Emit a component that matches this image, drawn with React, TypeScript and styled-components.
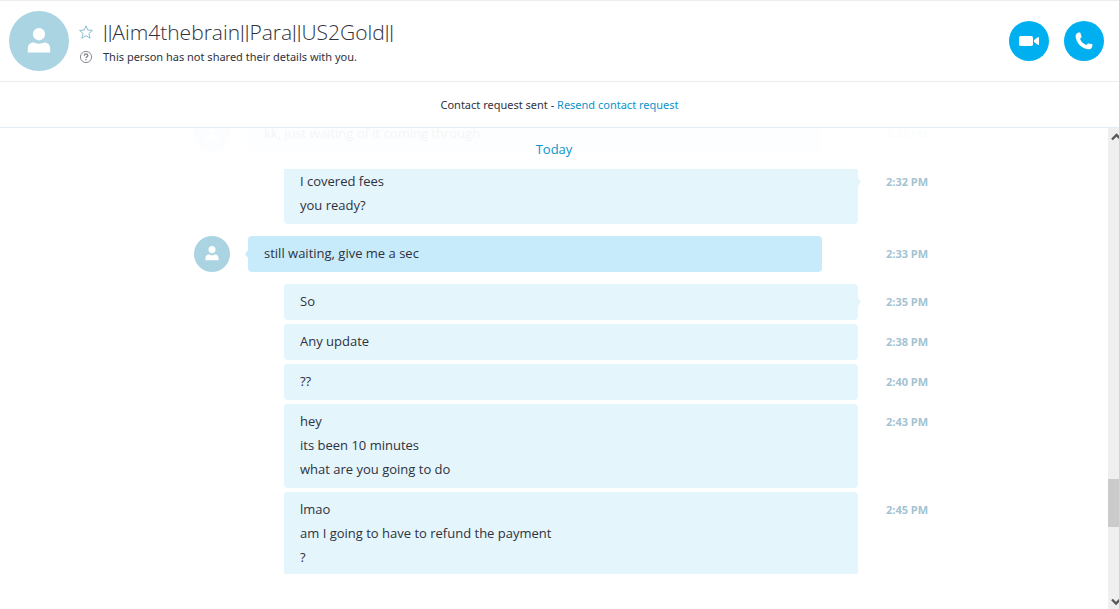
import React from "react";
import styled, { createGlobalStyle } from "styled-components";

const GlobalStyle = createGlobalStyle`
  * { box-sizing: border-box; }
  body {
    margin: 0;
    background: #fff;
    color: #2f323c;
    font-family: "Open Sans", "Noto Sans", sans-serif;
    font-size: 13px;
  }
`;

const Page = styled.div`
  display: flex;
  flex-direction: column;
  height: 100vh;
  overflow: hidden;
`;

const Header = styled.header`
  display: flex;
  align-items: center;
  gap: 10px;
  padding: 10px 15px 10px 9px;
  border-top: 1px solid #ececec;
  border-bottom: 1px solid #ececec;
`;

const Avatar = styled.div<{ $size: number }>`
  display: flex;
  flex: none;
  align-items: center;
  justify-content: center;
  width: ${(p) => p.$size}px;
  height: ${(p) => p.$size}px;
  border-radius: 50%;
  background: #aad4e2;
  color: #fff;
`;

const Details = styled.div`
  display: grid;
  flex: 1;
  grid-template-columns: 14px 1fr;
  column-gap: 10px;
  align-items: center;
`;

const Name = styled.h1`
  margin: 0;
  font-size: 21px;
  font-weight: 300;
  line-height: 30px;
  white-space: nowrap;
`;

const Bars = styled.span`
  font-family: Roboto, sans-serif;
  font-size: 21px;
`;

const Status = styled.p`
  margin: 0;
  font-family: "Noto Sans", sans-serif;
  font-size: 11px;
  line-height: 18px;
`;

const IconButton = styled.button`
  display: flex;
  padding: 0;
  border: 0;
  background: none;
  color: #8dbdd2;
  cursor: pointer;
`;

const HelpMark = styled.span`
  display: flex;
  color: #8b8f94;
`;

const Actions = styled.div`
  display: flex;
  gap: 15px;
`;

const CallButton = styled.button`
  display: flex;
  align-items: center;
  justify-content: center;
  width: 40px;
  height: 40px;
  padding: 0;
  border: 0;
  border-radius: 50%;
  background: #00aff0;
  color: #fff;
  cursor: pointer;
`;

const Notice = styled.div`
  padding: 14px 0 13px;
  border-bottom: 1px solid #e3eef4;
  font-family: "Noto Sans", sans-serif;
  font-size: 11px;
  line-height: 18px;
  text-align: center;
`;

const Link = styled.a`
  color: #0d93c9;
  text-decoration: none;
`;

const Body = styled.main`
  display: flex;
  flex: 1;
  min-height: 0;
`;

const Conversation = styled.section`
  position: relative;
  display: flex;
  flex: 1;
  min-width: 0;
  padding-bottom: 35px;
`;

const Viewport = styled.div`
  flex: 1;
  min-width: 0;
  overflow: hidden;
`;

const DayBar = styled.div`
  position: absolute;
  inset: 0 0 auto;
  height: 41px;
  padding-top: 9px;
  background: rgba(255, 255, 255, 0.95);
  color: #0d93c9;
  line-height: 24px;
  text-align: center;
`;

const Thread = styled.ol`
  display: flex;
  flex-direction: column;
  gap: 12px;
  max-width: 748px;
  margin: -12px auto 0;
  padding: 0 0 0 14px;
  list-style: none;
`;

const Group = styled.li`
  display: flex;
  flex-direction: column;
  gap: 4px;
`;

const Row = styled.div`
  display: grid;
  grid-template-columns: 36px 1fr 42px;
  column-gap: 18px;
`;

const Lane = styled.div<{ $own: boolean }>`
  grid-column: 2;
  padding: ${(p) => (p.$own ? "0 10px 0 36px" : "0 46px 0 0")};
`;

const Bubble = styled.div<{ $own: boolean; $tail: boolean }>`
  position: relative;
  padding: 5px 16px 7px;
  border-radius: 4px;
  background: ${(p) => (p.$own ? "#e4f5fc" : "#c7ebfb")};
  line-height: 24px;

  &::after {
    content: "";
    display: ${(p) => (p.$tail ? "block" : "none")};
    position: absolute;
    top: 14px;
    ${(p) => (p.$own ? "left: 100%" : "right: 100%")};
    border: solid transparent;
    border-width: ${(p) => (p.$own ? "4px 0 4px 3px" : "4px 3px 4px 0")};
    ${(p) => (p.$own ? "border-left-color: #e4f5fc" : "border-right-color: #c7ebfb")};
  }
`;

const Line = styled.p`
  margin: 0;
`;

const Time = styled.time`
  grid-column: 3;
  padding-top: 6px;
  color: #a3c3d3;
  font-size: 11px;
  font-weight: 700;
  line-height: 24px;
  white-space: nowrap;
`;

const Scrollbar = styled.div`
  display: flex;
  flex: none;
  flex-direction: column;
  width: 11px;
  background: #efefef;
  color: #55585c;
`;

const Track = styled.div`
  display: flex;
  flex: 1;
  flex-direction: column;
  justify-content: flex-end;
  padding-bottom: 65px;
`;

const Thumb = styled.div`
  height: 48px;
  background: #cbcbcb;
`;

const Arrow = styled.svg`
  display: block;
  flex: none;
`;

const Person = ({ width }: { width: number }) => (
  <svg width={width} height={(width * 26) / 24} viewBox="0 0 24 26" fill="currentColor" aria-hidden="true">
    <ellipse cx="12" cy="6.200" rx="6" ry="6.200" />
    <path d="M.8 24.500v-3.800c0-4.200 2.600-6.300 5.600-6.300 2 0 2.800 1.300 5.600 1.300s3.600-1.300 5.600-1.300c3 0 5.600 2.100 5.600 6.300v3.800z" />
  </svg>
);

type Message = { time: string; lines: string[] };
type MessageGroup = { own: boolean; messages: Message[] };

const groups: MessageGroup[] = [
  { own: false, messages: [{ time: "2:32 PM", lines: ["kk, just waiting of it coming through"] }] },
  { own: true, messages: [{ time: "2:32 PM", lines: ["I covered fees", "you ready?"] }] },
  { own: false, messages: [{ time: "2:33 PM", lines: ["still waiting, give me a sec"] }] },
  {
    own: true,
    messages: [
      { time: "2:35 PM", lines: ["So"] },
      { time: "2:38 PM", lines: ["Any update"] },
      { time: "2:40 PM", lines: ["??"] },
      { time: "2:43 PM", lines: ["hey", "its been 10 minutes", "what are you going to do"] },
      { time: "2:45 PM", lines: ["lmao", "am I going to have to refund the payment", "?"] },
    ],
  },
];

export default function App() {
  return (
    <Page>
      <GlobalStyle />
      <Header>
        <Avatar $size={60}>
          <Person width={24} />
        </Avatar>
        <Details>
          <IconButton aria-label="Add to favorites">
            <svg width="14" height="14" viewBox="0 0 14 14" fill="none" stroke="currentColor" strokeLinejoin="round">
              <path d="M7 .8l1.800 4.300 4.700.3-3.600 3.100 1.200 4.700L7 10.700l-4.100 2.500 1.200-4.700L.5 5.400l4.700-.3z" />
            </svg>
          </IconButton>
          <Name>
            <Bars>||</Bars>Aim4thebrain<Bars>||</Bars>Para<Bars>||</Bars>US2Gold<Bars>||</Bars>
          </Name>
          <HelpMark>
            <svg width="14" height="14" viewBox="0 0 14 14" fill="none" stroke="currentColor" aria-hidden="true">
              <circle cx="7" cy="7" r="5.600" />
              <path d="M5.200 5.700c0-1 .8-1.600 1.800-1.600s1.800.6 1.800 1.500c0 1.200-1.800 1.200-1.800 2.500M7 9v1.300" strokeWidth="1.500" />
            </svg>
          </HelpMark>
          <Status>This person has not shared their details with you.</Status>
        </Details>
        <Actions>
          <CallButton aria-label="Video call">
            <svg width="20" height="12" viewBox="0 0 20 12" fill="currentColor">
              <rect x="0" y="1" width="14" height="10" rx="1.800" />
              <path d="M15 5l4.200-3c.4-.2.8 0 .8.400v7.200c0 .4-.4.600-.8.400L15 7z" />
            </svg>
          </CallButton>
          <CallButton aria-label="Voice call">
            <svg width="18" height="18" viewBox="0 0 18 18" fill="currentColor">
              <path d="M1.200 2.300C2 1 3.400.4 4.600.6c.5.1.8.400 1 .9l.9 2.900c.1.500 0 .9-.4 1.300L5 6.800c.9 2.700 3.200 5 6.200 6.200l1.200-1.100c.4-.4.8-.5 1.300-.4l2.900.6c.6.1.9.500.9 1 0 1.500-.6 2.900-1.700 3.600-1 .7-2.300.8-4 .4C6.300 15.700 2.300 11.700.9 6.300.5 4.700.5 3.400 1.200 2.300z" />
            </svg>
          </CallButton>
        </Actions>
      </Header>
      <Notice>
        Contact request sent - <Link href="#resend">Resend contact request</Link>
      </Notice>
      <Body>
        <Conversation>
          <Viewport>
            <Thread>
              {groups.map((group, g) => (
                <Group key={g}>
                  {group.messages.map((message, m) => (
                    <Row key={message.time}>
                      {!group.own && (
                        <Avatar $size={36}>
                          <Person width={14} />
                        </Avatar>
                      )}
                      <Lane $own={group.own}>
                        <Bubble $own={group.own} $tail={m === 0}>
                          {message.lines.map((line) => (
                            <Line key={line}>{line}</Line>
                          ))}
                        </Bubble>
                      </Lane>
                      <Time>{message.time}</Time>
                    </Row>
                  ))}
                </Group>
              ))}
            </Thread>
          </Viewport>
          <DayBar>Today</DayBar>
        </Conversation>
        <Scrollbar aria-hidden="true">
          <Arrow width="11" height="17" viewBox="0 0 11 17" fill="none" stroke="currentColor" strokeWidth="2.4">
            <path d="M4 11.500l4.500-4.500 4.500 4.500" />
          </Arrow>
          <Track>
            <Thumb />
          </Track>
          <Arrow width="11" height="17" viewBox="0 0 11 17" fill="none" stroke="currentColor" strokeWidth="2.4">
            <path d="M4 7.500l4 4 4-4" />
          </Arrow>
        </Scrollbar>
      </Body>
    </Page>
  );
}
